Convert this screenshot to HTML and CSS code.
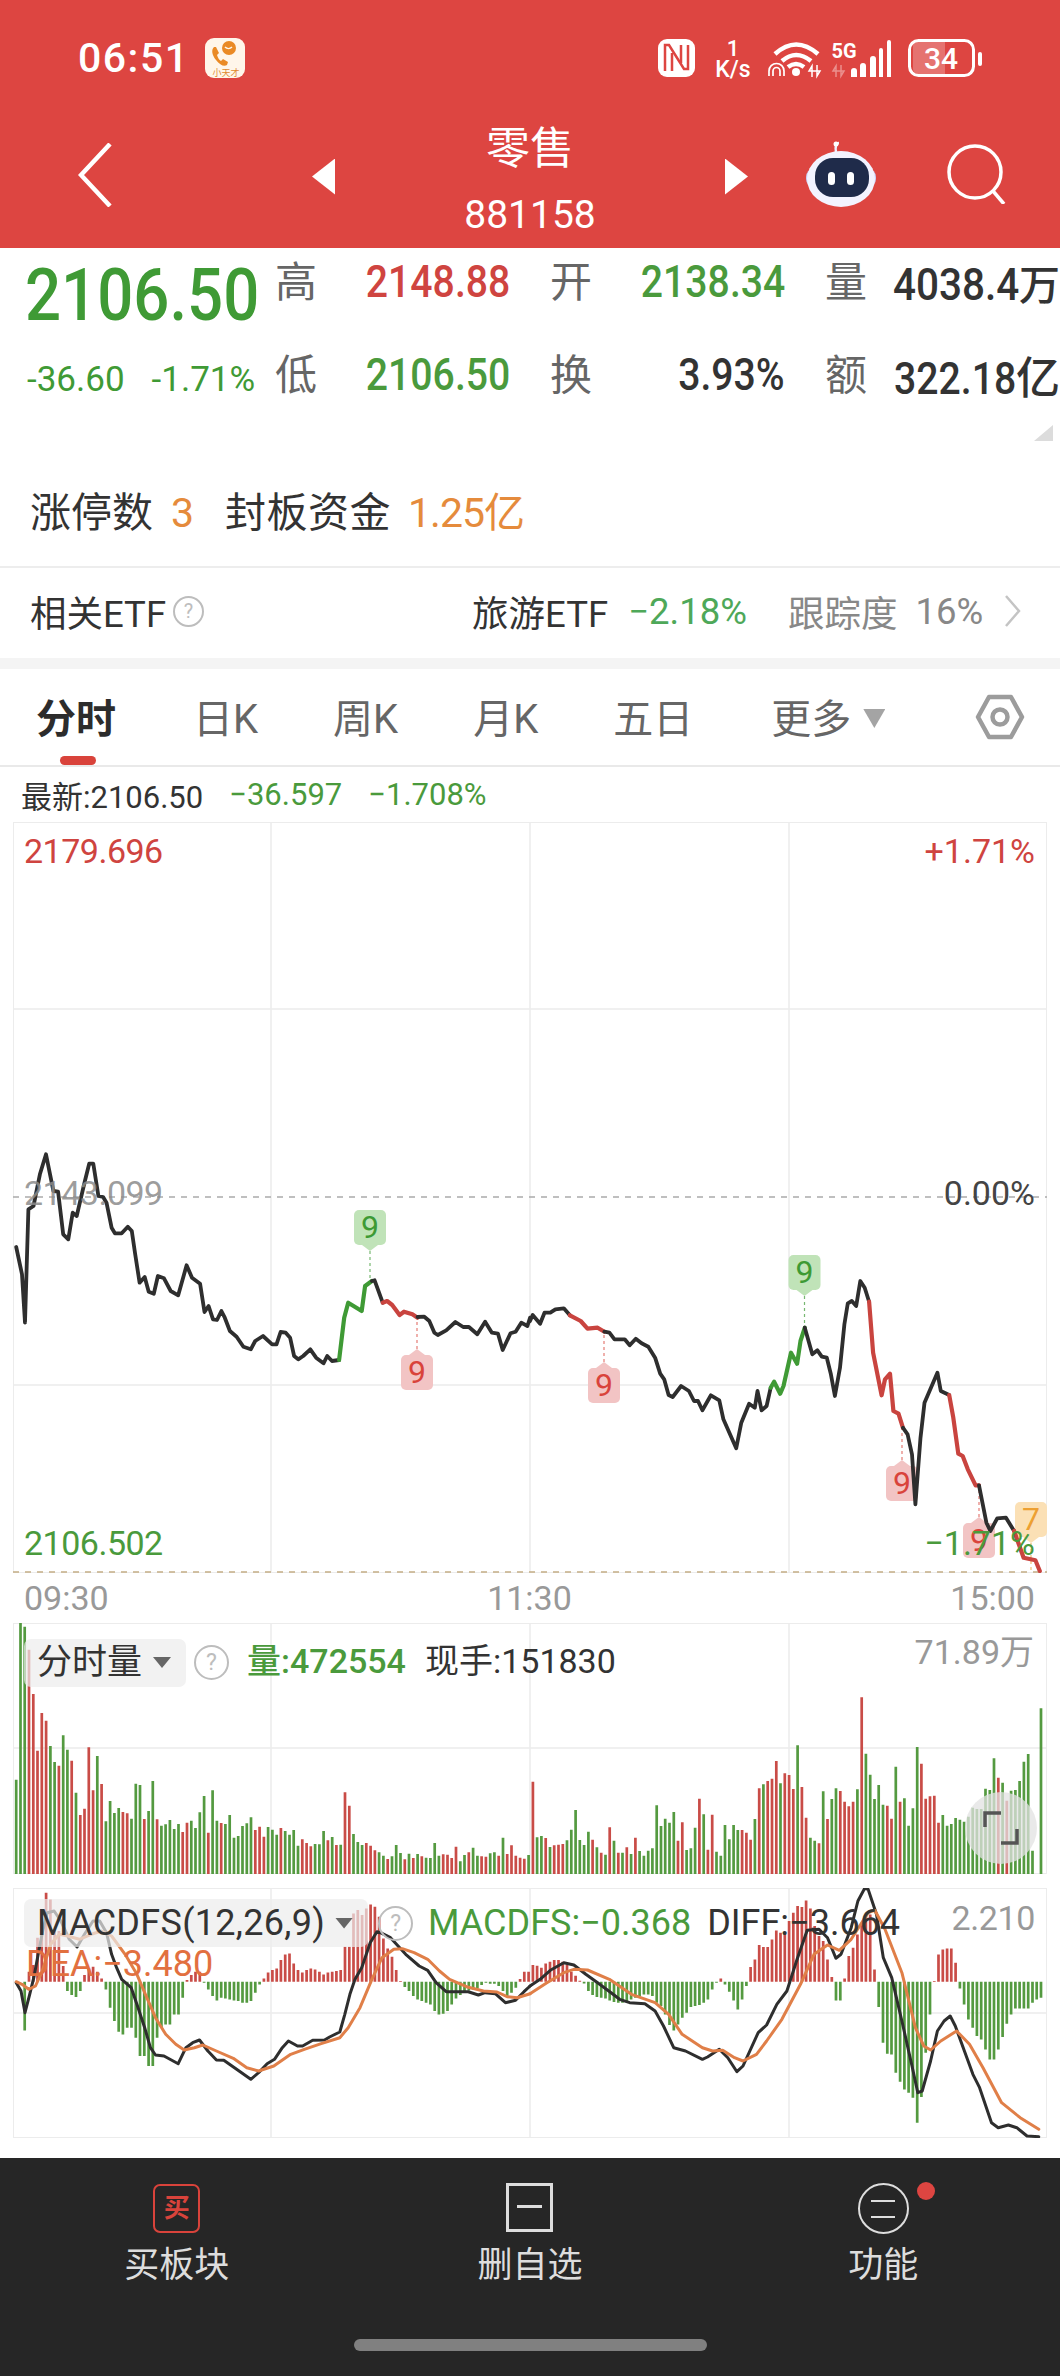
FILE: index.html

```html
<!doctype html>
<html>
<head>
<meta charset="utf-8">
<title>零售 881158</title>
<link rel="stylesheet" href="styles.css">
<meta name="viewport" content="width=device-width, initial-scale=1">
</head>
<body>
<div class="header">
  <div class="statusbar">
    <span class="clock">06:51</span>
    <svg class="app-icon" width="40" height="40" viewBox="0 0 40 40">
      <rect width="40" height="40" rx="9" fill="#fff6ea"/>
      <path d="M9 9c-3 3-2 8 2 13s8 7 11 5l1-3-5-3-2 2c-2-1-3-3-4-6l2-2-3-6z" fill="#ea8a25"/>
      <circle cx="24" cy="10" r="7" fill="#ea8a25"/>
      <path d="M20 9c2 2 5 2 7 0" stroke="#fff6ea" stroke-width="1.5" fill="none"/>
      <text x="21" y="38" class="app-name">小天才</text>
    </svg>
    <svg class="status-icons" width="325" height="42" viewBox="658 36 325 42">
      <rect x="658" y="38" width="37" height="38" rx="9" fill="#fff"/>
      <path d="M665 70V44h4l15 24h4V44" stroke="#dd4541" stroke-width="2.500" fill="none"/>
      <path d="M672 70V52M681 62V44" stroke="#dd4541" stroke-width="2.500" fill="none"/>
      <text x="733" y="55" class="st-num">1</text>
      <text x="733" y="76" class="st-unit">K/s</text>
      <path d="M775 53q21-19 43 0M782 60q14-12 29 0M788 66q8-6 16 0" stroke="#fff" stroke-width="4.5" fill="none"/>
      <circle cx="796" cy="71" r="4" fill="#fff"/>
      <path d="M769 75v-5a7.500 7.500 0 0 1 15 0v5M773 75v-5a3.500 3.500 0 0 1 7 0v5" stroke="#fff" stroke-width="1.700" fill="none"/>
      <path d="M812 76V65l-3 5h6M817 64v11l3-5h-6" stroke="#fff" stroke-width="1.500" fill="none"/>
      <text x="844" y="57" class="st-5g">5G</text>
      <path d="M836 76V65l-3 5h6M841 64v11l3-5h-6" stroke="#fff" stroke-opacity=".4" stroke-width="1.500" fill="none"/>
      <path d="M851 70a3 3 0 0 1 6 0v6h-6zM860 65a3 3 0 0 1 6 0v11h-6zM870 58a3 3 0 0 1 6 0v18h-6zM879 49a2 2 0 0 1 4 0v27h-4zM887 41a2 2 0 0 1 4 0v35h-4z" fill="#fff"/>
      <rect x="909.500" y="39.500" width="64" height="35" rx="9" fill="none" stroke="#fff" stroke-width="3"/>
      <path d="M913 44a5 5 0 0 1 5-5h27v34h-27a5 5 0 0 1-5-5z" fill="#fff" fill-opacity=".25"/>
      <rect x="978" y="51" width="4" height="14" rx="2" fill="#fff"/>
      <text x="941" y="68" class="st-batt">34</text>
    </svg>
  </div>
  <div class="navbar">
    <svg class="back" width="34" height="64" viewBox="0 0 34 64"><path d="M32 1L3 32l29 31" fill="none" stroke="#fff" stroke-width="4.500"/></svg>
    <span class="tri tri-left"></span>
    <div class="nav-title">
      <div class="nav-name">零售</div>
      <div class="nav-code">881158</div>
    </div>
    <span class="tri tri-right"></span>
    <svg class="robot" width="72" height="66" viewBox="805 142 72 66">
      <path d="M836 153c-1-5 0-9 3-9" stroke="#eef0ff" stroke-width="2.500" fill="none"/>
      <circle cx="836" cy="145" r="2.500" fill="#fff"/>
      <rect x="806" y="170" width="70" height="18" rx="8" fill="#c9cdf5"/>
      <ellipse cx="841" cy="180" rx="34" ry="28" fill="#f3f3ff"/>
      <rect x="815" y="159" width="54" height="39" rx="18" fill="#1f2b4a"/>
      <rect x="828" y="173" width="7" height="13" rx="3.500" fill="#fff"/>
      <rect x="847" y="173" width="7" height="13" rx="3.500" fill="#fff"/>
    </svg>
    <svg class="search" width="60" height="60" viewBox="0 0 60 60">
      <circle cx="28" cy="28" r="26" fill="none" stroke="#fff" stroke-width="3.500"/>
      <path d="M46 47l11 13" stroke="#fff" stroke-width="3.500"/>
    </svg>
  </div>
</div>

<div class="quote">
  <div class="price-col">
    <div class="price"><span class="cond-left">2106.50</span></div>
    <div class="change"><span>-36.60</span><span>-1.71%</span></div>
  </div>
  <div class="stats">
    <div class="stat"><span class="stat-label">高</span><span class="stat-value red"><span class="cond">2148.88</span></span></div>
    <div class="stat"><span class="stat-label">开</span><span class="stat-value green"><span class="cond">2138.34</span></span></div>
    <div class="stat"><span class="stat-label">量</span><span class="stat-value tail"><span class="cond">4038.4</span>万</span></div>
    <div class="stat"><span class="stat-label">低</span><span class="stat-value green"><span class="cond">2106.50</span></span></div>
    <div class="stat"><span class="stat-label">换</span><span class="stat-value"><span class="cond">3.93%</span></span></div>
    <div class="stat"><span class="stat-label">额</span><span class="stat-value"><span class="cond">322.18</span>亿</span></div>
  </div>
  <span class="corner"></span>
</div>

<div class="limits">
  <span>涨停数</span><span class="orange limit-count">3</span>
  <span class="limit-fund">封板资金</span><span class="orange limit-amount">1.25亿</span>
</div>

<div class="etf">
  <span>相关ETF</span>
  <span class="help help-small">?</span>
  <span class="etf-name">旅游ETF</span>
  <span class="etf-pct">−2.18%</span>
  <span class="etf-track">跟踪度</span>
  <span class="etf-track etf-val">16%</span>
  <svg class="etf-arrow" width="17" height="32" viewBox="0 0 17 32"><path d="M2 1l13 15L2 31" fill="none" stroke="#c4c4c4" stroke-width="2.500"/></svg>
</div>

<div class="band"></div>

<div class="tabs">
  <span class="tab active">分时</span>
  <span class="tab day">日K</span>
  <span class="tab week">周K</span>
  <span class="tab month">月K</span>
  <span class="tab wide">五日</span>
  <span class="tab">更多</span>
  <span class="caret caret-more"></span>
  <svg class="hex" width="50" height="46" viewBox="0 0 50 46">
    <path d="M14 3h22l11 20-11 20H14L3 23z" fill="none" stroke="#9c9c9c" stroke-width="4.500" stroke-linejoin="round"/>
    <circle cx="25" cy="23" r="7.500" fill="none" stroke="#9c9c9c" stroke-width="4.500"/>
  </svg>
</div>

<div class="latest">
  <span>最新:2106.50</span>
  <span class="green">−36.597</span>
  <span class="green">−1.708%</span>
</div>

<div class="chart chart-main">
  <svg id="main-svg" width="1034" height="751" viewBox="13 821 1034 751">
    <rect class="frame" x="13" y="821" width="1034" height="751"/>
    <path class="grid" d="M271 821V1572M530 821V1572M789 821V1572M13 1008H1047M13 1384H1047"/>
    <path class="dash-grey" d="M13 1196H1047"/>
    <path class="dash-tan" d="M13 1571H1047"/>
  </svg>
  <span class="lbl red lbl-top-left">2179.696</span>
  <span class="lbl red lbl-top-right">+1.71%</span>
  <span class="lbl lbl-ref-left">2143.099</span>
  <span class="lbl lbl-ref-right">0.00%</span>
  <span class="lbl green lbl-low-left">2106.502</span>
  <span class="lbl green lbl-low-right">−1.71%</span>
</div>

<div class="axis">
  <span>09:30</span><span>11:30</span><span>15:00</span>
</div>

<div class="chart chart-vol">
  <svg id="vol-svg" width="1034" height="251" viewBox="13 1622 1034 251">
    <rect class="frame" x="13" y="1622" width="1034" height="251"/>
    <path class="grid" d="M271 1622V1873M530 1622V1873M789 1622V1873M13 1747H1047"/>
  </svg>
  <div class="panel-head">
    <span class="panel-tag">分时量<span class="caret caret-tag"></span></span>
    <span class="help">?</span>
    <span class="green vol-num">量:472554</span>
    <span class="vol-hand">现手:151830</span>
  </div>
  <span class="lbl lbl-scale">71.89万</span>
  <div class="expand">
    <svg width="36" height="34" viewBox="0 0 36 34"><path d="M2 16V2h16M34 18v14H18" fill="none" stroke="#555" stroke-width="3.500"/></svg>
  </div>
</div>

<div class="chart chart-macd">
  <svg id="macd-svg" width="1034" height="250" viewBox="13 1887 1034 250">
    <rect class="frame" x="13" y="1887" width="1034" height="250"/>
    <path class="grid" d="M271 1887V2137M530 1887V2137M789 1887V2137M13 2012H1047"/>
  </svg>
  <div class="panel-head">
    <span class="panel-tag macd-tag">MACDFS(12,26,9)<span class="caret caret-tag"></span></span>
    <span class="help">?</span>
    <span class="green macd-num">MACDFS:−0.368</span>
    <span class="macd-num macd-diff">DIFF:−3.664</span>
  </div>
  <span class="lbl lbl-macd-max">2.210</span>
  <span class="lbl-dea">DEA:−3.480</span>
</div>

<div class="footer">
  <div class="actions">
    <div class="action">
      <div class="action-icon"><span class="buy-box">买</span></div>
      <div class="action-label">买板块</div>
    </div>
    <div class="action">
      <div class="action-icon"><span class="del-box"></span></div>
      <div class="action-label">删自选</div>
    </div>
    <div class="action">
      <div class="action-icon"><span class="fn-circle"></span><span class="fn-dot"></span></div>
      <div class="action-label">功能</div>
    </div>
  </div>
  <div class="home-pill"></div>
</div>

<script src="chart.js"></script>
</body>
</html>
```

FILE: styles.css

```css
html, body {
  margin: 0;
  padding: 0;
  background-color: white;
}
body {
  width: 1060px;
  height: 2376px;
  overflow: hidden;
  font-family: Roboto, "Noto Sans CJK SC", sans-serif;
  color: #333;
}
.red { color: #cf4440; }
.green { color: #4a9a3c; }
.orange { color: #e58b3c; }

/* header */
.header {
  height: 248px;
  background-color: #dd4541;
  color: white;
}
.statusbar {
  height: 100px;
  display: flex;
  align-items: center;
  padding-top: 16px;
  padding-left: 78px;
  box-sizing: border-box;
}
.clock {
  font-size: 41px;
  font-weight: 500;
  line-height: 40px;
  letter-spacing: 1.5px;
}
.app-icon {
  margin-left: 15px;
}
.app-name {
  font-size: 9px;
  fill: #e08a30;
  text-anchor: middle;
}
.status-icons {
  margin-left: auto;
  margin-right: 77px;
}
.st-num, .st-unit, .st-5g, .st-batt {
  fill: white;
  text-anchor: middle;
}
.st-num { font-size: 22px; font-weight: 500; }
.st-unit { font-size: 23px; font-weight: 500; }
.st-5g { font-size: 20px; font-weight: 700; }
.st-batt { font-size: 30px; font-weight: 500; }
.navbar {
  height: 148px;
  display: flex;
  align-items: center;
  padding-left: 78px;
}
.back {
  margin-top: 2px;
}
.tri {
  width: 23px;
  height: 36px;
  background-color: white;
  margin-top: 5px;
}
.tri-left {
  margin-left: 200px;
  clip-path: polygon(100% 0, 0 50%, 100% 100%);
}
.tri-right {
  clip-path: polygon(0 0, 100% 50%, 0 100%);
}
.nav-title {
  width: 390px;
  text-align: center;
  margin-top: 13px;
}
.nav-name {
  font-size: 44px;
  line-height: 48px;
}
.nav-code {
  font-size: 39px;
  line-height: 44px;
  margin-top: 20px;
}
.robot {
  margin-left: 57px;
}
.search {
  margin-left: 70px;
}

/* quote */
.quote {
  position: relative;
  display: flex;
  padding-left: 25px;
  height: 157px;
}
.price-col {
  width: 250px;
  white-space: nowrap;
}
.price {
  margin-top: 10px;
  font-size: 73px;
  line-height: 74px;
  font-weight: 500;
  color: #3f9a35;
}
.cond-left {
  display: inline-block;
  transform: scaleX(.87);
  transform-origin: left;
}
.change {
  margin-top: 28px;
  padding-left: 2px;
  font-size: 35px;
  line-height: 40px;
  color: #3f9a35;
  display: flex;
  gap: 27px;
}
.stats {
  margin-top: 2px;
  display: grid;
  grid-template-columns: repeat(3, 235px);
  grid-template-rows: 64px 64px;
  column-gap: 40px;
  row-gap: 29px;
}
.stat {
  display: flex;
  justify-content: space-between;
  align-items: center;
  white-space: nowrap;
}
.stat-label {
  font-size: 42px;
  color: #666;
  margin-top: -7px;
}
.stat-value {
  font-size: 44px;
  font-weight: 500;
}
.tail {
  font-size: 41px;
}
.tail .cond {
  font-size: 44px;
  transform: scaleX(.92);
}
.cond {
  display: inline-block;
  transform: scaleX(.89);
  transform-origin: right;
}
.corner {
  position: absolute;
  right: 7px;
  top: 177px;
  width: 19px;
  height: 16px;
  background-color: #dcdcdc;
  clip-path: polygon(100% 0, 100% 100%, 0 100%);
}
.limits {
  height: 41px;
  padding: 88px 30px 32px;
  font-size: 41px;
  line-height: 41px;
  border-bottom: 2px solid #ededed;
  display: flex;
  color: #333;
}
.limit-count { margin-left: 18px; }
.limit-fund { margin-left: 31px; letter-spacing: .5px; }
.limit-amount { margin-left: 17px; letter-spacing: -1px; }
.etf {
  height: 90px;
  display: flex;
  align-items: center;
  padding: 0 0 4px 30px;
  font-size: 36.500px;
  box-sizing: border-box;
}
.help {
  width: 31px;
  height: 31px;
  border: 2.5px solid #bdbdbd;
  border-radius: 50%;
  color: #bdbdbd;
  font-size: 23px;
  line-height: 31px;
  text-align: center;
  flex: none;
}
.help-small {
  width: 27px;
  height: 27px;
  line-height: 27px;
  font-size: 20px;
  margin-left: 7px;
}
.etf-name { margin-left: 268px; }
.etf-pct { margin-left: 20px; color: #4ea859; }
.etf-track { color: #888; margin-left: 41px; }
.etf-val { margin-left: 18px; }
.etf-arrow { margin-left: 21px; }
.band {
  height: 11px;
  background-color: #f4f4f4;
}

/* tabs */
.tabs {
  height: 98px;
  box-sizing: border-box;
  border-bottom: 2px solid #e9e9e9;
  display: flex;
  align-items: center;
  gap: 72px;
  padding: 0 0 3px 36px;
  font-size: 40px;
  color: #666;
  position: relative;
}
.tab {
  position: relative;
  white-space: nowrap;
}
.active {
  color: #2c2c2c;
  font-weight: 700;
  margin-right: 5px;
}
.active::after {
  content: "";
  position: absolute;
  left: 24px;
  top: 69px;
  width: 36px;
  height: 9px;
  border-radius: 5px;
  background-color: #d9433b;
}
.day {
  margin-right: 3px;
}
.week {
  margin-right: 3px;
}
.month {
  margin-right: 3px;
}
.wide {
  margin-right: 6px;
}
.caret {
  display: inline-block;
  background-color: #a4a4a4;
  clip-path: polygon(0 0, 100% 0, 50% 100%);
}
.caret-more {
  width: 22px;
  height: 19px;
  margin-left: -60px;
  margin-top: 6px;
}
.hex {
  margin-left: auto;
  margin-right: 35px;
  margin-top: 3px;
}

.latest {
  height: 55px;
  display: flex;
  align-items: center;
  padding-left: 21px;
  gap: 26px;
  font-size: 31px;
}

/* charts */
.chart {
  position: relative;
  margin: 0 13px;
}
.chart svg {
  display: block;
}
.frame {
  fill: none;
  stroke: #ececec;
  stroke-width: 2;
}
.grid {
  fill: none;
  stroke: #ececec;
  stroke-width: 1.500;
}
.dash-grey {
  fill: none;
  stroke: #aaa;
  stroke-width: 1.500;
  stroke-dasharray: 6 6;
}
.dash-tan {
  fill: none;
  stroke: #c4ad85;
  stroke-width: 1.500;
  stroke-dasharray: 6 6;
}
.lbl {
  position: absolute;
  font-size: 34px;
  line-height: 34px;
  white-space: nowrap;
}
.lbl-top-left { left: 11px; top: 12px; letter-spacing: -.5px; }
.lbl-top-right { right: 12px; top: 12px; }
.lbl-ref-left { left: 11px; top: 354px; color: rgba(140, 140, 140, .85); letter-spacing: -.5px; }
.lbl-ref-right { right: 12px; top: 354px; color: #444; }
.lbl-low-left { left: 11px; top: 704px; letter-spacing: -.5px; }
.lbl-low-right { right: 12px; top: 704px; }
.chart-main { height: 751px; }
.axis {
  height: 50px;
  display: flex;
  justify-content: space-between;
  align-items: center;
  padding: 0 25px 0 24px;
  font-size: 34px;
  color: #999;
}
.chart-vol { height: 251px; margin-bottom: 14px; }
.chart-macd { height: 250px; }
.panel-head {
  position: absolute;
  left: 11px;
  top: 11px;
  display: flex;
  align-items: center;
  white-space: nowrap;
  font-size: 35px;
}
.panel-tag {
  height: 48px;
  line-height: 48px;
  padding: 0 15px 0 13px;
  background-color: rgba(236, 236, 236, .7);
  border-radius: 7px;
  display: flex;
  align-items: center;
}
.caret-tag {
  width: 18px;
  height: 11px;
  margin-left: 11px;
  background-color: #666;
}
.chart-vol .help { margin-left: 8px; }
.vol-num {
  margin-left: 18px;
  margin-bottom: 8px;
  font-weight: 500;
  font-size: 34px;
}
.vol-hand {
  margin-left: 19px;
  margin-bottom: 8px;
  font-size: 34px;
}
.lbl-scale { right: 13px; top: 12px; color: #999; }
.expand {
  position: absolute;
  left: 952px;
  top: 169px;
  width: 72px;
  height: 72px;
  border-radius: 50%;
  background-color: rgba(225, 225, 225, .75);
  display: flex;
  align-items: center;
  justify-content: center;
}
.macd-tag {
  font-size: 36px;
  letter-spacing: .3px;
}
.macd-tag .caret-tag {
  margin-left: 10px;
}
.chart-macd .help { margin-left: 10px; }
.macd-num {
  font-size: 36px;
  margin-left: 15px;
}
.macd-diff {
  margin-left: 16px;
}
.lbl-macd-max { right: 12px; top: 13px; color: #999; letter-spacing: -.4px; }
.lbl-dea {
  position: absolute;
  left: 13px;
  top: 58px;
  font-size: 36px;
  line-height: 36px;
  color: #e2703f;
  white-space: nowrap;
}

/* footer */
.footer {
  margin-top: 20px;
  height: 219px;
  background-color: #262626;
  color: #ddd;
  display: flex;
  flex-direction: column;
}
.actions {
  display: grid;
  grid-template-columns: repeat(3, 1fr);
  padding-top: 25px;
}
.action {
  display: flex;
  flex-direction: column;
  align-items: center;
}
.action-icon {
  position: relative;
  height: 51px;
}
.action-label {
  margin-top: 14px;
  font-size: 35px;
  line-height: 35px;
}
.buy-box {
  display: block;
  box-sizing: border-box;
  width: 47px;
  height: 49px;
  margin-top: 1px;
  border: 2.5px solid #d9433b;
  border-radius: 7px;
  color: #d9433b;
  font-size: 26px;
  font-weight: 700;
  line-height: 44px;
  text-align: center;
}
.del-box {
  display: block;
  box-sizing: border-box;
  position: relative;
  width: 47px;
  height: 49px;
  border: 3px solid #ddd;
}
.del-box::after {
  content: "";
  position: absolute;
  left: 8px;
  top: 19px;
  width: 25px;
  height: 3px;
  background-color: #ddd;
}
.fn-circle {
  display: block;
  box-sizing: border-box;
  position: relative;
  width: 51px;
  height: 51px;
  border: 2.5px solid #ddd;
  border-radius: 50%;
}
.fn-circle::after {
  content: "";
  position: absolute;
  left: 11px;
  top: 15px;
  width: 24px;
  height: 14px;
  border-top: 2.5px solid #ddd;
  border-bottom: 2.5px solid #ddd;
}
.fn-dot {
  position: absolute;
  left: 59px;
  top: -1px;
  width: 18px;
  height: 18px;
  border-radius: 50%;
  background-color: #dd4541;
}
.home-pill {
  width: 353px;
  height: 12px;
  margin: 56px auto 0;
  border-radius: 6px;
  background-color: #808080;
}
```

FILE: chart.js

```js
// minute series read off the panels; units are 1/3 px, negative means red for volume
var NS = 'http://www.w3.org/2000/svg';
var GREEN = '#549a40', RED = '#c94c47', LINE = '#2e2e2e', ORANGE = '#e07f48';
var vols = [283,758,742,-673,-540,-370,-483,-460,384,336,-325,416,373,-340,244,-177,-196,-380,-251,354,
  -270,158,219,183,198,-186,-182,166,271,267,-165,189,279,-164,145,149,162,135,150,-126,
  -154,160,138,185,234,-124,251,160,-153,150,177,109,114,144,152,170,-132,-142,-112,141,
  133,118,-138,129,118,132,85,-104,-93,-83,90,89,129,-101,111,-87,88,-245,-205,120,
  96,87,-93,-85,-71,65,55,-45,53,87,63,-44,61,-48,60,-53,49,48,93,55,
  -59,-58,-48,-82,38,57,-65,79,55,-53,-52,62,65,-55,109,-60,-86,-55,-49,-46,57,
  -277,110,114,-108,81,-86,-88,-90,101,133,192,102,87,127,-103,80,-64,58,-140,100,
  -64,64,-80,60,-109,69,55,70,77,206,144,166,154,186,-100,-155,72,77,139,-226,
  179,-73,-178,67,55,147,104,147,132,-132,-124,-103,165,-257,269,-279,-286,-339,272,-302,
  -297,-255,386,-261,-169,109,100,-92,248,-165,225,257,-249,-217,-203,-217,254,-530,361,298,
  225,267,208,-205,-166,322,-217,227,145,197,381,-331,-226,-233,-235,-154,177,145,150,168,
  163,157,172,199,195,195,256,252,347,-289,274,-220,250,252,279,337,360,70,0,497];
// macd histogram, positive is red and goes up
var hist = [0,0,-146,30,50,132,190,267,247,157,152,47,-28,-40,-46,-28,20,40,45,30,
  10,-23,-78,-118,-150,-158,-138,-138,-168,-223,-223,-253,-253,-168,-138,-128,-128,-98,-98,-48,
  5,20,30,30,-3,-23,-43,-56,-48,-50,-53,-56,-58,-63,-63,-58,-33,-8,10,28,
  35,40,65,82,85,55,35,28,35,40,37,30,22,28,30,32,35,105,105,205,
  215,200,220,232,225,195,130,100,75,35,2,-16,-28,-43,-53,-58,-63,-68,-88,-98,
  -96,-88,-68,-50,-40,-33,-26,-23,-20,-10,-3,-6,-6,-13,-28,-43,-33,-18,8,30,30,
  50,48,42,55,60,65,65,60,50,30,18,3,-5,-28,-40,-46,-48,-50,-56,-61,
  -63,-63,-58,-53,-48,-43,-38,-38,-43,-63,-73,-98,-130,-146,-128,-108,-93,-76,-73,-70,
  -63,-53,-23,-3,10,-8,-30,-56,-83,-53,-13,44,67,110,104,104,127,154,147,142,
  182,207,227,224,244,220,167,137,122,67,14,-56,-56,10,77,102,142,172,202,202,
  37,-76,-183,-216,-218,-273,-300,-323,-333,-348,-423,-346,-213,-98,2,82,97,100,100,57,
  -20,-68,-113,-138,-163,-173,-203,-233,-233,-203,-166,-126,-98,-80,-80,-80,-80,-63,-53,-48];

function add(svg, name, attrs, text) {
  var el = document.createElementNS(NS, name);
  for (var k in attrs) el.setAttribute(k, attrs[k]);
  if (text) el.textContent = text;
  svg.appendChild(el);
  return el;
}
function barX(i) {
  return (16.2 + i * 4.27).toFixed(1);
}
// crop points: "x,y x,y", with an origin and the crop's scale
function line(svg, str, ox, oy, color, w) {
  var pts = str.split(' ').map(function (p) {
    var a = p.split(',');
    return (ox + a[0] / 2.958).toFixed(1) + ',' + (oy + a[1] / 3).toFixed(1);
  }).join(' ');
  add(svg, 'polyline', { points: pts, fill: 'none', stroke: color, 'stroke-width': w, 'stroke-linejoin': 'round', 'stroke-linecap': 'round' });
}
function marker(svg, cx, top, up, fill, color, label, dashTo) {
  var tip = up ? top - 6 : top + 41;
  var y1 = up ? top : top + 35;
  add(svg, 'path', { d: 'M' + cx + ' ' + tip + 'V' + dashTo, stroke: color, 'stroke-width': 1.2, 'stroke-dasharray': '3 3', opacity: .7, fill: 'none' });
  add(svg, 'path', { d: 'M' + (cx - 8) + ' ' + y1 + 'L' + cx + ' ' + tip + 'L' + (cx + 8) + ' ' + y1 + 'z', fill: fill });
  add(svg, 'rect', { x: cx - 16, y: top, width: 32, height: 35, rx: 5, fill: fill });
  add(svg, 'text', { x: cx, y: top + 28, 'text-anchor': 'middle', 'font-size': 32, fill: color }, label);
}

// volume
var volSvg = document.getElementById('vol-svg');
var volPaths = { g: '', r: '' };
vols.forEach(function (v, i) {
  if (!v) return;
  volPaths[v < 0 ? 'r' : 'g'] += 'M' + barX(i) + ' 1873v-' + (Math.abs(v) / 3).toFixed(1);
});
add(volSvg, 'path', { d: volPaths.g, stroke: GREEN, 'stroke-width': 2.7, fill: 'none' });
add(volSvg, 'path', { d: volPaths.r, stroke: RED, 'stroke-width': 2.7, fill: 'none' });

// macd
var macdSvg = document.getElementById('macd-svg');
var histPaths = { g: '', r: '' };
hist.forEach(function (v, i) {
  if (!v) return;
  histPaths[v > 0 ? 'r' : 'g'] += 'M' + barX(i) + ' 1980.7v' + (-v / 3).toFixed(1);
});
add(macdSvg, 'path', { d: histPaths.g, stroke: GREEN, 'stroke-width': 2.7, fill: 'none' });
add(macdSvg, 'path', { d: histPaths.r, stroke: RED, 'stroke-width': 2.7, fill: 'none' });
var MACD_W = 3;
line(macdSvg, '48,335 62,360 74,425 88,370 100,320 113,250 125,185 140,125 160,120 180,150 205,205 228,228 250,190 275,150 295,150 315,185 330,250 345,290 360,325 388,350 405,400 428,470 445,530 460,552 485,555 527,578 550,530 570,515 590,507 615,540 640,567 662,568 700,595 742,625 765,605 790,578 812,565 835,530 853,510 880,525 895,525 925,508 960,507 975,498 1005,483 1020,430 1035,370 1050,325 1070,290 1095,215 1115,182 1130,187 1155,200 1200,250 1240,285 1265,298 1290,335 1320,362 1350,362 1385,362 1415,372 1435,365 1465,368 1495,395 1525,388 1550,362 1568,345', 0, 1870, LINE, MACD_W);
line(macdSvg, '0,345 30,325 60,298 100,275 130,282 165,310 200,335 240,365 265,385 295,395 340,398 370,420 395,465 425,530 460,540 510,565 525,558 560,535 585,560 612,602 630,585 675,485 700,462 730,400 760,360 790,265 820,178 855,175 880,200 905,262 920,250 950,170 970,90 990,52 1000,55 1025,130 1045,260 1070,320 1100,450 1130,585 1147,665 1160,660 1185,570 1205,480 1225,450 1243,435 1258,465 1285,540 1310,610 1330,650 1365,755 1385,770 1415,762 1440,770 1470,795 1505,797', 530, 1870, LINE, MACD_W);
line(macdSvg, '48,332 65,340 85,355 105,345 125,300 150,220 175,190 200,195 235,205 270,190 300,180 330,195 370,250 405,310 430,370 460,440 490,490 520,520 545,537 575,530 600,522 640,540 690,562 730,590 765,600 810,585 860,550 900,535 950,518 1005,500 1030,470 1065,410 1100,325 1130,260 1165,235 1190,233 1225,245 1265,265 1300,300 1330,325 1380,347 1430,360 1470,363 1500,377 1530,380 1568,368', 0, 1870, ORANGE, MACD_W);
line(macdSvg, '0,368 50,335 100,305 130,295 170,297 235,325 300,370 370,395 410,430 450,490 510,530 540,540 570,538 605,560 630,570 670,550 700,510 745,445 800,340 840,250 880,222 915,238 950,205 1000,125 1020,118 1050,175 1100,305 1140,470 1165,525 1185,537 1215,510 1262,480 1300,520 1340,590 1395,695 1450,740 1505,775', 530, 1870, ORANGE, MACD_W);

// price line, split where the signal colours start and stop
var mainSvg = document.getElementById('main-svg');
marker(mainSvg, 370, 1209, false, '#c0e3b8', '#3d9a34', '9', 1278);
marker(mainSvg, 417, 1354, true, '#f2c4c4', '#d9433b', '9', 1317);
marker(mainSvg, 604, 1367, true, '#f2c4c4', '#d9433b', '9', 1331);
marker(mainSvg, 804.5, 1254, false, '#c0e3b8', '#3d9a34', '9', 1325);
marker(mainSvg, 902, 1465, true, '#f2c4c4', '#d9433b', '9', 1427);
marker(mainSvg, 979, 1522, true, '#f2c4c4', '#d9433b', '9', 1484);
marker(mainSvg, 1031, 1501, false, '#fbe0b5', '#eda032', '7', 1570);
var PRICE_W = 3.8, SIGNAL_W = 4.2, PRICE_G = '#3f9a35', PRICE_R = '#c9443f';
line(mainSvg, '48,228 65,310 74,455 84,115 99,105 118,10 136,-50 158,60 172,62 187,190 202,205 215,125 227,135 251,30 264,-22 276,-22 291,75 305,78 315,95 330,170 340,187 360,187 378,167 390,180 400,250 413,335 428,318 440,362 455,368 467,315 485,322 505,360 527,373 552,283 568,320 592,338 605,423 617,405 630,445 642,447 655,420 665,440 680,480 700,497 720,527 742,535 755,510 778,495 805,520 818,520 830,483 845,485 858,500 870,555 882,565 897,555 918,535 935,560 957,577 968,555 982,570 1003,567', 0, 1170, LINE, PRICE_W);
line(mainSvg, '1003,567 1018,440 1030,395 1070,420 1080,345 1100,330', 0, 1170, PRICE_G, SIGNAL_W);
line(mainSvg, '1100,330 1108,328 1132,395', 0, 1170, LINE, PRICE_W);
line(mainSvg, '1132,395 1145,390 1160,402 1182,432 1195,422 1220,430 1235,440', 0, 1170, PRICE_R, SIGNAL_W);
line(mainSvg, '1235,438 1255,437 1270,450 1285,485 1295,492 1320,478 1347,453 1370,468 1387,468 1412,490 1435,452 1455,485 1473,488 1487,537 1510,487 1525,482 1542,455 1560,465 1568,440', 0, 1170, LINE, PRICE_W);
line(mainSvg, '0,450 8,432 30,458 43,425 60,425 75,415 100,412 118,433', 530, 1170, LINE, PRICE_W);
line(mainSvg, '118,433 150,450 170,473 200,470 220,482', 530, 1170, PRICE_R, SIGNAL_W);
line(mainSvg, '220,482 235,485 250,505 280,505 295,523 313,503 330,517 350,527 370,560 385,608 397,625 410,672 422,678 447,645 470,660 485,690 497,690 510,718 535,673 560,688 572,745 610,832 625,755 648,698 665,710 673,660 685,718 700,705 712,650', 530, 1170, LINE, PRICE_W);
line(mainSvg, '712,650 722,632 740,668 750,645 772,545 790,578 800,510 813,470', 530, 1170, PRICE_G, SIGNAL_W);
line(mainSvg, '813,470 835,550 850,538 863,557 878,560 890,610 902,675 917,590 930,460 940,397 952,390 965,405 977,330 990,350 1003,392', 530, 1170, LINE, PRICE_W);
line(mainSvg, '1003,392 1015,545 1040,673 1050,625 1065,608 1075,720 1090,728 1103,770', 530, 1170, PRICE_R, SIGNAL_W);
line(mainSvg, '1103,770 1117,790 1130,850 1140,1000 1155,800 1167,695 1205,605 1215,660 1240,672', 530, 1170, LINE, PRICE_W);
line(mainSvg, '1240,672 1252,740 1267,848 1280,855 1295,895 1318,943 1328,943', 530, 1170, PRICE_R, SIGNAL_W);
line(mainSvg, '1328,943 1350,1055 1362,1080 1382,1042 1408,1040 1432,1080', 530, 1170, LINE, PRICE_W);
line(mainSvg, '1432,1080 1460,1160 1495,1168 1508,1200', 530, 1170, PRICE_R, SIGNAL_W);
```
